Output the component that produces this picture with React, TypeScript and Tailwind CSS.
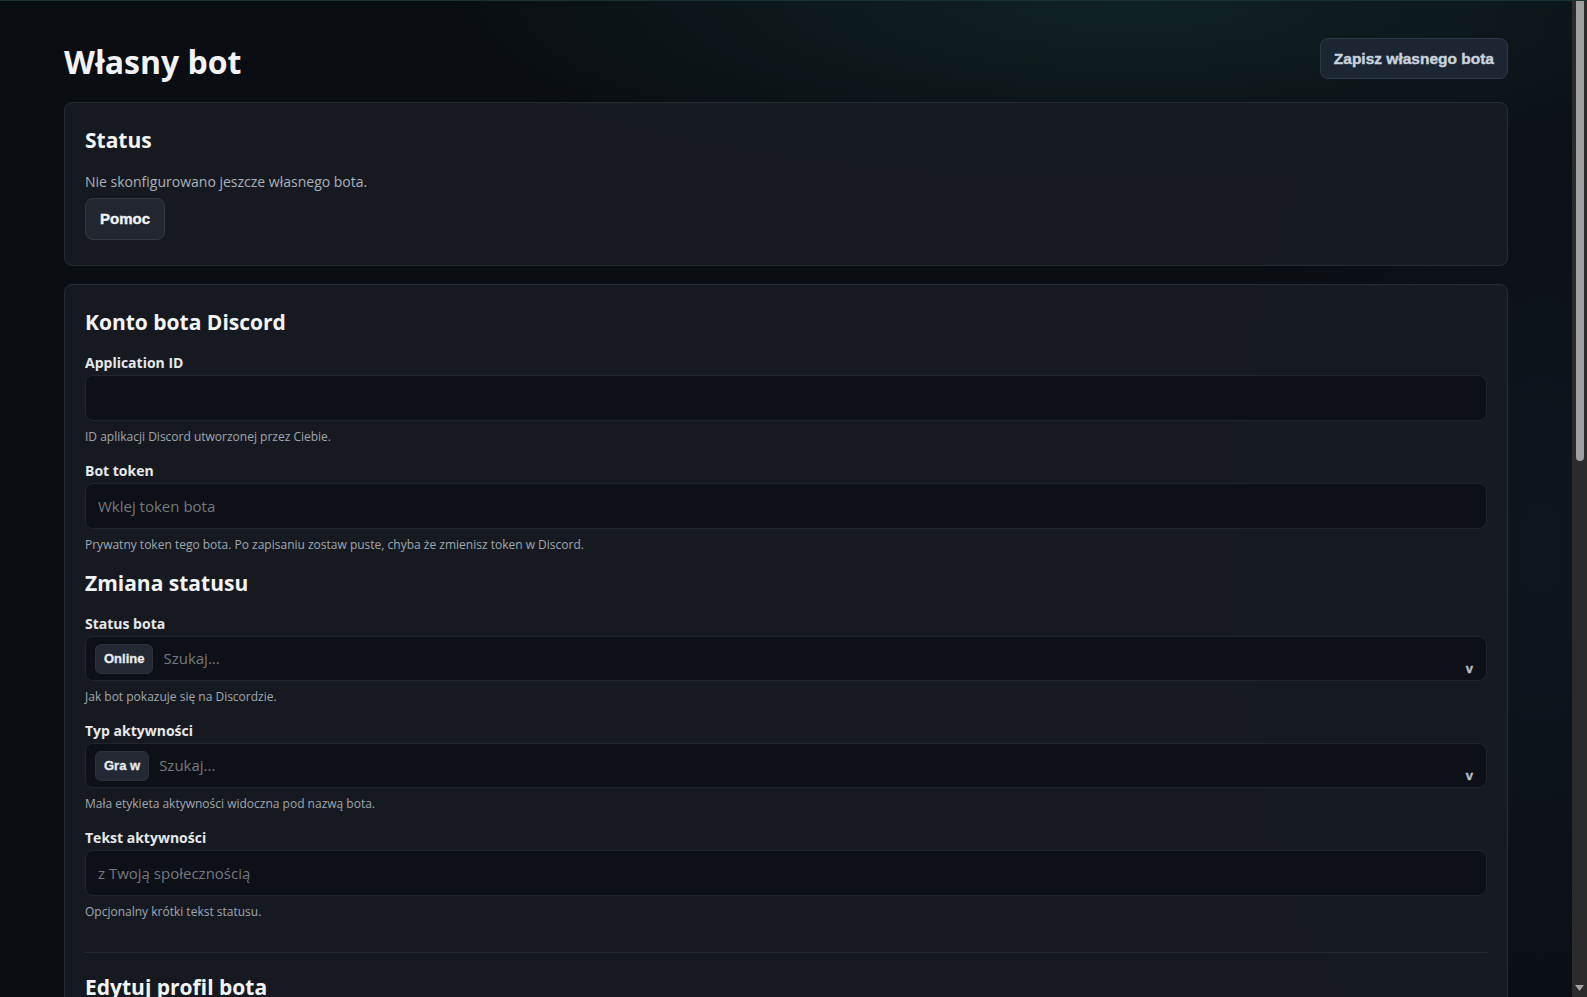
import { ReactNode } from 'react';

interface FieldProps {
  label: string;
  hint?: string;
  children: ReactNode;
}

const Field = ({ label, hint, children }: FieldProps) => (
  <div>
    <label className="mb-[2px] block text-[14px] font-bold leading-5 text-[#e6e8eb]">{label}</label>
    {children}
    {hint && <p className="mt-2 text-xs leading-4 text-[#a0a6af]">{hint}</p>}
  </div>
);

const TextInput = ({ placeholder }: { placeholder?: string }) => (
  <input
    type="text"
    placeholder={placeholder}
    className="h-[46px] w-full rounded-lg border border-[#20252d] bg-[#0d1016] px-3 text-[15px] font-medium text-gray-100 outline-none placeholder:text-[#74797f]"
  />
);

const SearchSelect = ({ value }: { value: string }) => (
  <div className="relative flex h-[45px] items-center gap-2.5 rounded-lg border border-[#20252d] bg-[#0d1016] pl-[9px] pr-10">
    <span className="flex h-[30px] items-center rounded-md border border-[#2c313b] bg-[#232832] px-2 font-['Liberation_Sans',Arial,sans-serif] text-[13px] font-bold text-[#e8ebef] [-webkit-text-stroke:0.3px_#e8ebef]">
      {value}
    </span>
    <input
      type="text"
      placeholder="Szukaj..."
      className="min-w-0 flex-1 bg-transparent text-[15px] font-medium text-gray-100 outline-none placeholder:text-[#74797f]"
    />
    <span className="absolute bottom-[5px] right-[13px] font-['Liberation_Sans',Arial,sans-serif] text-[13px] font-bold leading-none text-[#b9bec6] [-webkit-text-stroke:0.4px_#b9bec6]">
      v
    </span>
  </div>
);

const SectionTitle = ({ children }: { children: ReactNode }) => (
  <h2 className="mb-px text-[21px] font-bold leading-7 text-[#f3f4f6]">{children}</h2>
);

const Card = ({ children }: { children: ReactNode }) => (
  <section className="rounded-lg border border-[#262b34] bg-[#171b22]/95 px-5 pb-[25px] pt-[23px]">{children}</section>
);

// page scrollbar as it appears in the screenshot
const Scrollbar = () => (
  <aside className="relative flex w-[15px] shrink-0 flex-col bg-[#2b2b2b]">
    <div className="mx-auto h-[460px] w-[8px] rounded-b-full bg-[#9f9f9f]" />
    <svg className="absolute bottom-[6px] left-[3px]" width="9" height="6" viewBox="0 0 9 6">
      <path d="M0 0h9L4.5 6z" fill="#a3a3a3" />
    </svg>
  </aside>
);

export default function App() {
  return (
    <div className="flex h-screen overflow-hidden border-t border-[#173233] bg-[#0a0d12] font-['Open_Sans',sans-serif]">
      <main className="min-w-0 flex-1 overflow-hidden bg-[radial-gradient(ellipse_45%_18%_at_72%_0%,rgba(28,86,78,0.3),transparent),radial-gradient(ellipse_20%_60%_at_98%_55%,rgba(22,40,52,0.35),transparent)]">
        <div className="px-16 pb-16 pt-[37px]">
          <header className="mb-5 flex items-start justify-between">
            <h1 className="mt-1 text-[32px] font-bold leading-10 text-[#f1f3f6]">Własny bot</h1>
            <button className="h-[41px] rounded-lg border border-[#2c3a48] bg-[#1b2632] px-[13px] font-['Liberation_Sans',Arial,sans-serif] text-[15.5px] font-bold text-[#c9d3de] [-webkit-text-stroke:0.4px_#c9d3de]">
              Zapisz własnego bota
            </button>
          </header>

          <div className="flex flex-col gap-[18px]">
            <Card>
              <h2 className="mb-[18px] text-[21px] font-bold leading-7 text-[#f3f4f6]">Status</h2>
              <p className="text-[14px] leading-5 text-[#aab0b9]">Nie skonfigurowano jeszcze własnego bota.</p>
              <button className="mt-1.5 h-[42px] rounded-lg border border-[#333842] bg-[#22262f] px-[14px] font-['Liberation_Sans',Arial,sans-serif] text-[15px] font-bold text-[#f1f3f6] [-webkit-text-stroke:0.4px_#f1f3f6]">
                Pomoc
              </button>
            </Card>

            <Card>
              <div className="flex flex-col gap-4">
                <SectionTitle>Konto bota Discord</SectionTitle>
                <Field label="Application ID" hint="ID aplikacji Discord utworzonej przez Ciebie.">
                  <TextInput />
                </Field>
                <Field label="Bot token" hint="Prywatny token tego bota. Po zapisaniu zostaw puste, chyba że zmienisz token w Discord.">
                  <TextInput placeholder="Wklej token bota" />
                </Field>

                <SectionTitle>Zmiana statusu</SectionTitle>
                <Field label="Status bota" hint="Jak bot pokazuje się na Discordzie.">
                  <SearchSelect value="Online" />
                </Field>
                <Field label="Typ aktywności" hint="Mała etykieta aktywności widoczna pod nazwą bota.">
                  <SearchSelect value="Gra w" />
                </Field>
                <Field label="Tekst aktywności" hint="Opcjonalny krótki tekst statusu.">
                  <TextInput placeholder="z Twoją społecznością" />
                </Field>

                <hr className="mb-1 mt-4 border-[#252a33]" />

                <SectionTitle>Edytuj profil bota</SectionTitle>
                <Field label="Nazwa bota" hint="Nazwa widoczna na liście członków serwera.">
                  <TextInput placeholder="Mój bot" />
                </Field>
              </div>
            </Card>
          </div>
        </div>
      </main>
      <Scrollbar />
    </div>
  );
}
